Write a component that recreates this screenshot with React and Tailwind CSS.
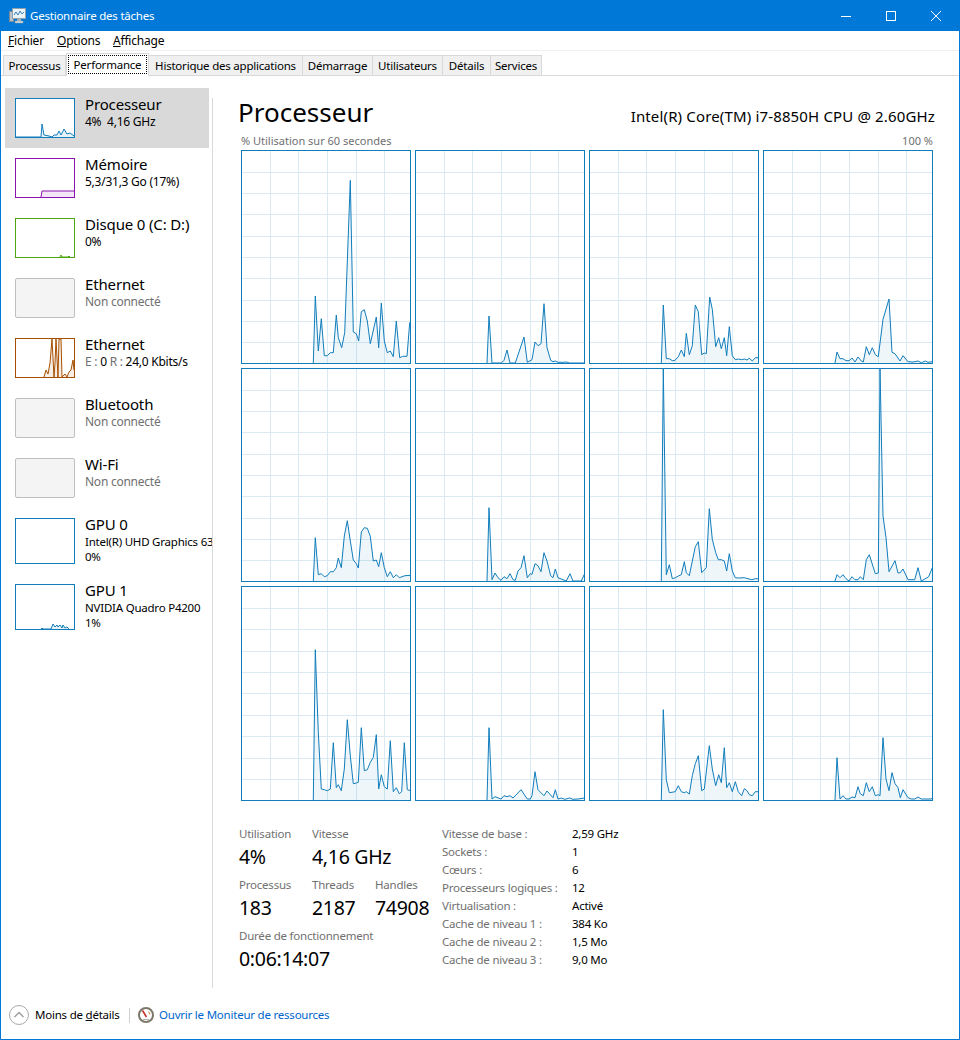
import React from 'react';

// chart traces, read from the reference at 3x: [left of box, baseline, "x,y x,y ..."]
const traces = [
  [18, 656, '235,656 241,455 250,620 259,523 268,634 277,634 286,625 295,625 304,512 310,580 320,610 329,565 346,108 355,563 364,568 371,590 379,502 388,496 397,530 406,598 424,518 431,610 439,476 448,590 457,625 466,620 475,637 484,530 494,640 503,636 516,636 524,535 527,535'],
  [541, 656, '757,656 763,515 772,656 800,656 808,648 817,617 826,656 842,656 868,578 878,654 892,646 901,593 910,604 919,598 928,478 937,610 948,648 955,652 962,650 970,654 985,654 995,653 1005,656 1049,656'],
  [12, 656, '229,656 235,482 244,643 253,643 262,649 270,648 280,637 289,617 298,637 304,567 313,631 322,604 331,482 340,502 350,631 358,626 364,628 374,458 382,495 392,607 401,580 409,613 418,580 425,634 433,547 442,634 451,646 460,644 470,646 478,644 486,647 493,642 502,650 511,640 520,640'],
  [535, 656, '751,656 757,623 766,643 775,643 784,649 793,649 802,641 811,653 820,638 830,650 836,653 845,607 854,631 863,610 872,631 881,637 895,525 913,464 922,624 931,628 946,650 955,634 970,652 985,653 1000,650 1010,655 1022,650 1030,654 1043,652'],
  [18, 650, '235,650 241,520 250,631 259,628 268,637 277,634 286,622 295,622 304,610 310,581 319,610 328,515 337,469 346,530 355,587 364,598 370,611 379,503 388,490 397,492 406,516 415,590 424,587 431,607 439,565 448,610 457,637 466,622 475,640 484,631 493,640 510,634 527,633'],
  [541, 650, '757,650 763,430 772,646 781,626 790,640 799,648 808,637 817,643 826,628 835,646 842,648 850,620 859,610 868,574 878,640 887,628 892,630 901,598 910,604 919,622 928,565 937,590 948,634 955,640 962,614 970,640 985,646 995,650 1006,628 1015,650 1040,650 1049,630'],
  [12, 650, '229,650 235,12 244,631 253,601 262,643 271,640 280,635 289,631 298,592 304,625 313,634 322,590 331,547 340,532 350,625 364,610 373,433 382,525 392,565 400,586 409,586 418,590 425,620 433,568 442,620 451,640 460,641 478,640 500,646 511,643 520,643'],
  [535, 650, '751,650 757,631 766,640 775,631 784,643 793,650 802,637 811,646 820,646 827,637 836,646 845,586 854,571 872,628 881,626 886,12 895,455 904,520 913,622 931,589 940,626 947,625 955,614 970,646 990,646 1000,610 1010,650 1032,637 1043,610'],
  [18, 653, '235,653 241,202 250,450 259,620 268,622 277,625 286,620 295,481 304,616 310,607 319,625 328,560 337,412 346,520 355,604 364,602 370,600 379,436 388,565 397,562 406,540 415,525 424,457 431,620 439,577 448,613 457,620 466,475 475,628 484,616 493,634 500,628 508,481 517,622 527,625'],
  [541, 653, '757,653 763,436 772,650 781,643 799,650 808,640 817,643 826,640 835,647 859,622 878,650 887,650 892,640 901,568 910,622 928,640 937,626 955,646 962,622 970,650 980,647 990,651 1005,647 1015,651 1030,650 1049,647'],
  [12, 653, '229,653 235,382 244,592 253,631 271,628 280,610 289,628 298,631 304,628 313,635 322,580 331,544 340,520 350,625 358,620 373,490 382,560 392,610 401,577 409,601 418,496 425,616 433,601 442,628 451,598 460,628 470,640 478,619 486,625 493,637 502,640 511,628 520,628'],
  [535, 653, '751,653 757,526 766,650 775,640 784,650 793,650 802,644 811,646 820,613 827,634 836,640 845,601 854,628 863,613 872,640 881,637 886,640 895,466 904,590 913,625 922,571 931,604 940,616 947,646 955,622 970,646 980,650 990,650 1000,644 1010,650 1040,650 1043,646'],
];

const colX = [28.5, 56.5, 85.5, 114.5, 142.5];
const rowY = [21.5, 42.5, 63.5, 85.5, 106.5, 127.5, 149.5, 170.5, 191.5];
const rowYLast = [21.5, 42.5, 64.5, 85.5, 106.5, 128.5, 149.5, 171.5, 192.5];

const CpuChart = ({ trace, last }) => {
  const [left, base, raw] = trace;
  const h = last ? 213 : 212;
  const pts = raw.split(' ').map((p) => {
    const [x, y] = p.split(',').map(Number);
    return [((x - left) / 3 - 1).toFixed(1), (h - (base - y) / 3).toFixed(1)];
  });
  const line = pts.map((p) => p.join(',')).join(' ');
  const area = `${pts[0][0]},${h} ${line} ${pts[pts.length - 1][0]},${h}`;
  return (
    <div className="border border-[#117dbb] bg-white">
      <svg width="168" height={h} className="block">
        {colX.map((x) => (
          <line key={x} x1={x} x2={x} y1="0" y2={h} stroke="#d9eaf4" />
        ))}
        {(last ? rowYLast : rowY).map((y) => (
          <line key={y} x1="0" x2="168" y1={y} y2={y} stroke="#d9eaf4" />
        ))}
        <polygon points={area} fill="#117dbb" fillOpacity="0.07" />
        <polyline points={line} fill="none" stroke="#117dbb" strokeWidth="1" />
      </svg>
    </div>
  );
};

// small thumbnail in the left list
const Thumb = ({ color, h = 40, line, fill }) => (
  <div className="shrink-0 border bg-white" style={{ borderColor: color, height: h }}>
    <svg width="58" height={h - 2} className="block">
      {line && <polygon points={`${line.split(' ')[0].split(',')[0]},${h - 2} ${line} 58,${h - 2}`} fill={fill || color} fillOpacity="0.1" />}
      {line && <polyline points={line} fill="none" stroke={color} strokeWidth="1" />}
    </svg>
  </div>
);

const OffThumb = () => (
  <div className="h-[40px] w-[60px] shrink-0 rounded-[2px] border border-[#bfbfbf] bg-[#f4f4f4]" />
);

const Item = ({ thumb, title, children, selected, tall }) => (
  <div className={`flex w-[204px] gap-[10px] pl-[10px] pt-[10px] ${tall ? 'h-[66px]' : 'h-[60px]'} ${selected ? 'bg-[#d9d9d9]' : ''}`}>
    <div className="w-[60px] shrink-0">{thumb}</div>
    <div className="whitespace-nowrap">
      <div className="-mt-[4px] text-[15px] leading-[20px] tracking-[-0.15px] text-black">{title}</div>
      <div className={`leading-[15px] text-black ${tall ? 'text-[11.5px] tracking-[-0.22px]' : 'text-[12px] tracking-[-0.25px]'}`}>{children}</div>
    </div>
  </div>
);

const Stat = ({ label, value, w }) => (
  <div className={w}>
    <div className="h-[16px] text-[11.5px] leading-[14px] tracking-[-0.22px] text-[#707070]">{label}</div>
    <div className="h-[28px] text-[19.5px] leading-[28px] tracking-[-0.3px] text-black">{value}</div>
  </div>
);

const specs = [
  ['Vitesse de base :', '2,59 GHz'],
  ['Sockets :', '1'],
  ['Cœurs :', '6'],
  ['Processeurs logiques :', '12'],
  ['Virtualisation :', 'Activé'],
  ['Cache de niveau 1 :', '384 Ko'],
  ['Cache de niveau 2 :', '1,5 Mo'],
  ['Cache de niveau 3 :', '9,0 Mo'],
];

const tabs = [
  ['Processus', 'w-[63px] border-l'],
  ['Performance', ''],
  ['Historique des applications', 'w-[154px]'],
  ['Démarrage', 'w-[70px]'],
  ['Utilisateurs', 'w-[70px]'],
  ['Détails', 'w-[48px]'],
  ['Services', 'w-[51px]'],
];

const TaskIcon = () => (
  <svg width="17" height="16" viewBox="0 0 17 16" className="block">
    <rect x="0.5" y="3.5" width="4" height="10" fill="#b9c4cc" stroke="#7d8a94" />
    <rect x="3.5" y="0.5" width="13" height="10" fill="#eaf3fa" stroke="#8fa0ad" />
    <polyline points="5,7 7,4 9,7 11,3 13,6 15,4" fill="none" stroke="#3a7fb5" />
    <rect x="8" y="11" width="4" height="2" fill="#a9b5bd" />
    <rect x="6" y="13" width="8" height="2" fill="#d5dce1" stroke="#8fa0ad" strokeWidth="0.5" />
  </svg>
);

const App = () => {
  return (
    <div className="flex h-[1040px] w-[960px] flex-col overflow-hidden border-x border-b border-[#0078d7] bg-white [font-family:Noto_Sans,sans-serif] text-black">
      {/* title bar */}
      <div className="flex h-[31px] shrink-0 items-center bg-[#0078d7] pl-[8px] text-white">
        <TaskIcon />
        <span className="ml-[4px] text-[11.5px] tracking-[-0.22px]">Gestionnaire des tâches</span>
        <div className="ml-auto flex h-full pr-px">
          <div className="flex w-[45px] items-center justify-center">
            <svg width="10" height="10"><line x1="0" x2="10" y1="5.5" y2="5.5" stroke="#fff" /></svg>
          </div>
          <div className="flex w-[45px] items-center justify-center">
            <svg width="10" height="10"><rect x="0.5" y="0.5" width="9" height="9" fill="none" stroke="#fff" /></svg>
          </div>
          <div className="flex w-[45px] items-center justify-center">
            <svg width="10" height="10"><path d="M0 0L10 10M10 0L0 10" stroke="#fff" /></svg>
          </div>
        </div>
      </div>

      {/* menu */}
      <div className="flex h-[20px] shrink-0 items-center border-b border-[#f0f0f0] pl-[7px] text-[12px] tracking-[-0.2px]">
        <span className="w-[49px]"><span className="underline">F</span>ichier</span>
        <span className="w-[56px]"><span className="underline">O</span>ptions</span>
        <span><span className="underline">A</span>ffichage</span>
      </div>

      {/* tabs */}
      <div className="flex h-[25px] shrink-0 items-end border-b border-[#d9d9d9] pl-[2px] text-[11.5px] tracking-[-0.22px]">
        {tabs.map(([name, cls]) =>
          name === 'Performance' ? (
            <div key={name} className="-mb-px flex h-[23px] w-[83px] shrink-0 items-start border-x border-t border-[#d9d9d9] bg-white px-px pt-px">
              <div className="flex h-[19px] w-full items-center justify-center border border-dotted border-black">{name}</div>
            </div>
          ) : (
            <div key={name} className={`flex h-[20px] shrink-0 items-center justify-center whitespace-nowrap border-r border-t border-[#d9d9d9] bg-[#f0f0f0] ${cls}`}>
              {name}
            </div>
          )
        )}
      </div>

      <div className="flex min-h-0 flex-1">
        {/* left list */}
        <div className="w-[211px] shrink-0 overflow-hidden pl-[4px] pt-[12px]">
          <Item selected title="Processeur" thumb={<Thumb color="#117dbb" line="0,38 25,38 26,25 28,36 33,37 36,38 38,36 41,36 43,32 45,36 48,30 51,35 54,34 58,37" />}>
            4%&nbsp; 4,16 GHz
          </Item>
          <Item title="Mémoire" thumb={<Thumb color="#8b12ae" line="25,38 26,32 58,32" />}>5,3/31,3 Go (17%)</Item>
          <Item title="Disque 0 (C: D:)" thumb={<Thumb color="#4da60c" line="44,38 45,36 46,38 52,38 53,37 54,38" />}>0%</Item>
          <Item title="Ethernet" thumb={<OffThumb />}>
            <span className="text-[#707070]">Non connecté</span>
          </Item>
          <Item
            title="Ethernet"
            thumb={<Thumb color="#a74f01" line="28,38 30,31 32,35 34,24 36,0 38,38 39,24 40,0 42,38 43,0 45,0 46,38 49,35 51,38 53,33 55,31 57,21 58,31" />}
          >
            <span className="text-[#707070]">E : </span>0 <span className="text-[#707070]">R : </span>24,0 Kbits/s
          </Item>
          <Item title="Bluetooth" thumb={<OffThumb />}>
            <span className="text-[#707070]">Non connecté</span>
          </Item>
          <Item title="Wi-Fi" thumb={<OffThumb />}>
            <span className="text-[#707070]">Non connecté</span>
          </Item>
          <Item tall title="GPU 0" thumb={<Thumb color="#117dbb" h={46} />}>
            Intel(R) UHD Graphics 630
            <br />
            0%
          </Item>
          <Item tall title="GPU 1" thumb={<Thumb color="#117dbb" h={46} line="25,44 26,43 27,44 35,44 37,39 39,42 41,40 42,42 44,40 46,43 47,40 49,43 51,42 53,44" />}>
            NVIDIA Quadro P4200
            <br />
            1%
          </Item>
        </div>

        <div className="mt-[22px] w-px shrink-0 bg-[#d9d9d9]" />

        {/* main panel */}
        <div className="flex-1 pl-[28px] pt-[20px]">
          <div className="flex h-[36px] w-[694px] items-center justify-between">
            <span className="-ml-[3px] -mt-[4px] text-[26px] leading-[36px]">Processeur</span>
            <span className="mt-[4px] whitespace-nowrap text-[15px] tracking-[0.15px]">Intel(R) Core(TM) i7-8850H CPU @ 2.60GHz</span>
          </div>
          <div className="mt-[2px] flex h-[16px] w-[692px] justify-between text-[11px] leading-[14px] text-[#707070]">
            <span>% Utilisation sur 60 secondes</span>
            <span>100 %</span>
          </div>

          <div className="grid w-[692px] grid-cols-4 grid-rows-[214px_214px_215px] gap-[4px]">
            {traces.map((t, i) => (
              <CpuChart key={i} trace={t} last={i > 7} />
            ))}
          </div>

          <div className="mt-[25px] flex">
            <div className="-ml-[2px] mt-px flex w-[203px] shrink-0 flex-col gap-[7px]">
              <div className="flex">
                <Stat w="w-[73px]" label="Utilisation" value="4%" />
                <Stat label="Vitesse" value="4,16 GHz" />
              </div>
              <div className="flex whitespace-nowrap">
                <Stat w="w-[73px]" label="Processus" value="183" />
                <Stat w="w-[63px]" label="Threads" value="2187" />
                <Stat label="Handles" value="74908" />
              </div>
              <Stat label="Durée de fonctionnement" value="0:06:14:07" />
            </div>
            <div className="-mt-px grid grid-cols-[130px_auto] auto-rows-[18px] text-[11.5px] leading-[18px] tracking-[-0.22px]">
              {specs.map(([k, v]) => (
                <React.Fragment key={k}>
                  <span className="text-[#707070]">{k}</span>
                  <span>{v}</span>
                </React.Fragment>
              ))}
            </div>
          </div>
        </div>
      </div>

      {/* footer */}
      <div className="flex h-[51px] shrink-0 items-center pl-[8px] pt-[3px] text-[11.5px] tracking-[-0.22px]">
        <svg width="20" height="20" className="block shrink-0">
          <circle cx="10" cy="10" r="9.5" fill="#fff" stroke="#a8a8a8" />
          <path d="M5.5 12L10 7.5L14.5 12" fill="none" stroke="#a0a0a0" strokeWidth="1.5" />
        </svg>
        <span className="ml-[6px] w-[94px] whitespace-nowrap">
          Moins de <span className="underline">d</span>étails
        </span>
        <div className="h-[15px] w-px bg-[#d0d0d0]" />
        <svg width="16" height="16" className="ml-[8px] block shrink-0">
          <circle cx="8" cy="8" r="7" fill="#fff" stroke="#7d786c" strokeWidth="2" />
          <path d="M4.5 3.5L8.5 10" stroke="#c8322b" strokeWidth="1.6" />
          <path d="M10.5 4.5L12 7.5" stroke="#e08a3c" />
          <path d="M5 12.5H11" stroke="#b5b0a5" />
        </svg>
        <span className="ml-[5px] text-[#0066cc]">Ouvrir le Moniteur de ressources</span>
      </div>
    </div>
  );
};

export default App;
